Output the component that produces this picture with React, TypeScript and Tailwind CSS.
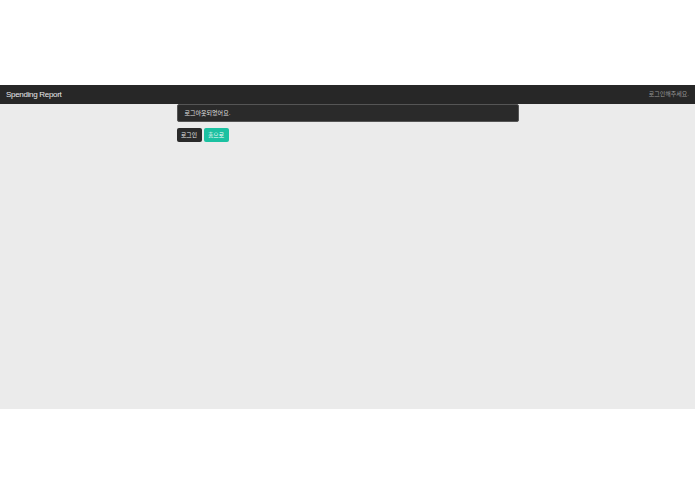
export default function App() {
  return (
    <div className="min-h-screen bg-white font-['Liberation_Sans','Noto_Sans_CJK_KR',sans-serif] antialiased">
      <div className="h-[85px]" />
      <nav className="flex h-[19px] items-center justify-between bg-[#272727] px-[6px]">
        <span className="text-[8px] tracking-[-0.3px] text-[#e8e8e8]">Spending Report</span>
        <span className="text-[6px] text-[#9a9a9a]">로그인해주세요.</span>
      </nav>
      <main className="h-[305px] bg-[#ebebeb]">
        <div className="mx-auto w-[342px]">
          <div className="flex h-[18px] items-center rounded-[2px] border border-[#555] bg-[#2a2a2a] px-[7px]">
            <span className="text-[6px] text-[#e0e0e0]">로그아웃되었어요.</span>
          </div>
          <div className="mt-[6px] flex gap-[2px]">
            <button className="flex h-[14px] w-[25px] items-center justify-center rounded-[2px] bg-[#2a2a2a] text-[5.8px] text-[#e8e8e8]">
              로그인
            </button>
            <button className="flex h-[14px] w-[25px] items-center justify-center rounded-[2px] bg-[#1bc1a1] text-[5.8px] text-white">
              홈으로
            </button>
          </div>
        </div>
      </main>
    </div>
  );
}
